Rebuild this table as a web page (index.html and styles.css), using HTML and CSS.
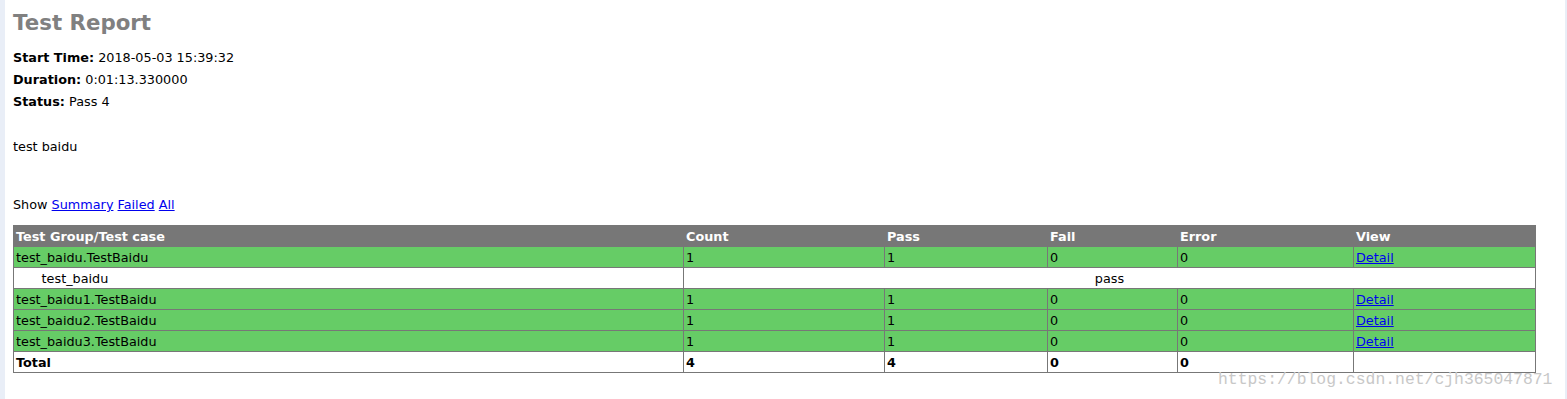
FILE: index.html
```html
<!DOCTYPE html>
<html lang="en">
<head>
<meta charset="utf-8">
<title>Test Report</title>
<link rel="stylesheet" href="styles.css">
</head>
<body>
<div class="page">
  <div class="heading">
    <h1>Test Report</h1>
    <p class="attribute"><strong>Start Time:</strong> 2018-05-03 15:39:32</p>
    <p class="attribute"><strong>Duration:</strong> 0:01:13.330000</p>
    <p class="attribute"><strong>Status:</strong> Pass 4</p>
    <p class="description">test baidu</p>
  </div>
  <p class="show-line">Show
    <a href="#">Summary</a>
    <a href="#">Failed</a>
    <a href="#">All</a>
  </p>
  <table class="result-table">
    <colgroup>
      <col class="c-group">
      <col class="c-count">
      <col class="c-pass">
      <col class="c-fail">
      <col class="c-error">
      <col class="c-view">
    </colgroup>
    <tr class="header-row">
      <td>Test Group/Test case</td>
      <td>Count</td>
      <td>Pass</td>
      <td>Fail</td>
      <td>Error</td>
      <td>View</td>
    </tr>
    <tr class="pass-class">
      <td>test_baidu.TestBaidu</td>
      <td>1</td>
      <td>1</td>
      <td>0</td>
      <td>0</td>
      <td><a href="#">Detail</a></td>
    </tr>
    <tr class="case-row">
      <td><div class="testcase">test_baidu</div></td>
      <td colspan="5" class="center">pass</td>
    </tr>
    <tr class="pass-class">
      <td>test_baidu1.TestBaidu</td>
      <td>1</td>
      <td>1</td>
      <td>0</td>
      <td>0</td>
      <td><a href="#">Detail</a></td>
    </tr>
    <tr class="pass-class">
      <td>test_baidu2.TestBaidu</td>
      <td>1</td>
      <td>1</td>
      <td>0</td>
      <td>0</td>
      <td><a href="#">Detail</a></td>
    </tr>
    <tr class="pass-class">
      <td>test_baidu3.TestBaidu</td>
      <td>1</td>
      <td>1</td>
      <td>0</td>
      <td>0</td>
      <td><a href="#">Detail</a></td>
    </tr>
    <tr class="total-row">
      <td>Total</td>
      <td>4</td>
      <td>4</td>
      <td>0</td>
      <td>0</td>
      <td>&nbsp;</td>
    </tr>
  </table>
</div>
<div class="watermark">https://blog.csdn.net/cjh365047871</div>
</body>
</html>
```

FILE: styles.css
```css
html, body {
  margin: 0;
  padding: 0;
  background: #ffffff;
}

body {
  font-family: "DejaVu Sans", Verdana, sans-serif;
  font-size: 12.8px;
  color: #000;
  min-height: 100vh;
  box-sizing: border-box;
  border-left: 5px solid #e9eef7;
  border-right: 2px solid #e9eef7;
  position: relative;
}

.page {
  padding: 0 8px;
}

h1 {
  font-size: 21.33px;
  line-height: 25px;
  color: #808080;
  margin: 10px 0 15px;
  font-weight: bold;
}

.heading p {
  line-height: 14px;
  padding-top: 1px;
}

.attribute {
  margin: 7px 0 0;
}

.description {
  margin: 30px 0 43px;
}

.show-line {
  line-height: 14px;
  padding-top: 1px;
  margin: 0 0 13px;
}

a {
  color: #0000ee;
  text-decoration: underline;
}

.result-table {
  border-collapse: collapse;
  border: 1px solid #777;
  table-layout: fixed;
  width: 1523px;
  font-size: 12.8px;
}

.c-group { width: 670px; }
.c-count { width: 201px; }
.c-pass { width: 163px; }
.c-fail { width: 130px; }
.c-error { width: 176px; }
.c-view { width: 182px; }

.result-table td {
  border: 1px solid #777;
  padding: 3px 2px 1px;
  line-height: 16px;
  text-align: left;
  vertical-align: middle;
}

.header-row {
  font-weight: bold;
  color: #ffffff;
  background-color: #777;
}

.pass-class {
  background-color: #66cc66;
}

.total-row {
  font-weight: bold;
}

.testcase {
  margin-left: 2em;
}

.result-table td.center {
  text-align: center;
}

.watermark {
  position: absolute;
  left: 1213px;
  top: 370px;
  font-family: "Liberation Mono", monospace;
  font-size: 16.4px;
  line-height: 20px;
  color: #c8c8c8;
  white-space: nowrap;
}
```
